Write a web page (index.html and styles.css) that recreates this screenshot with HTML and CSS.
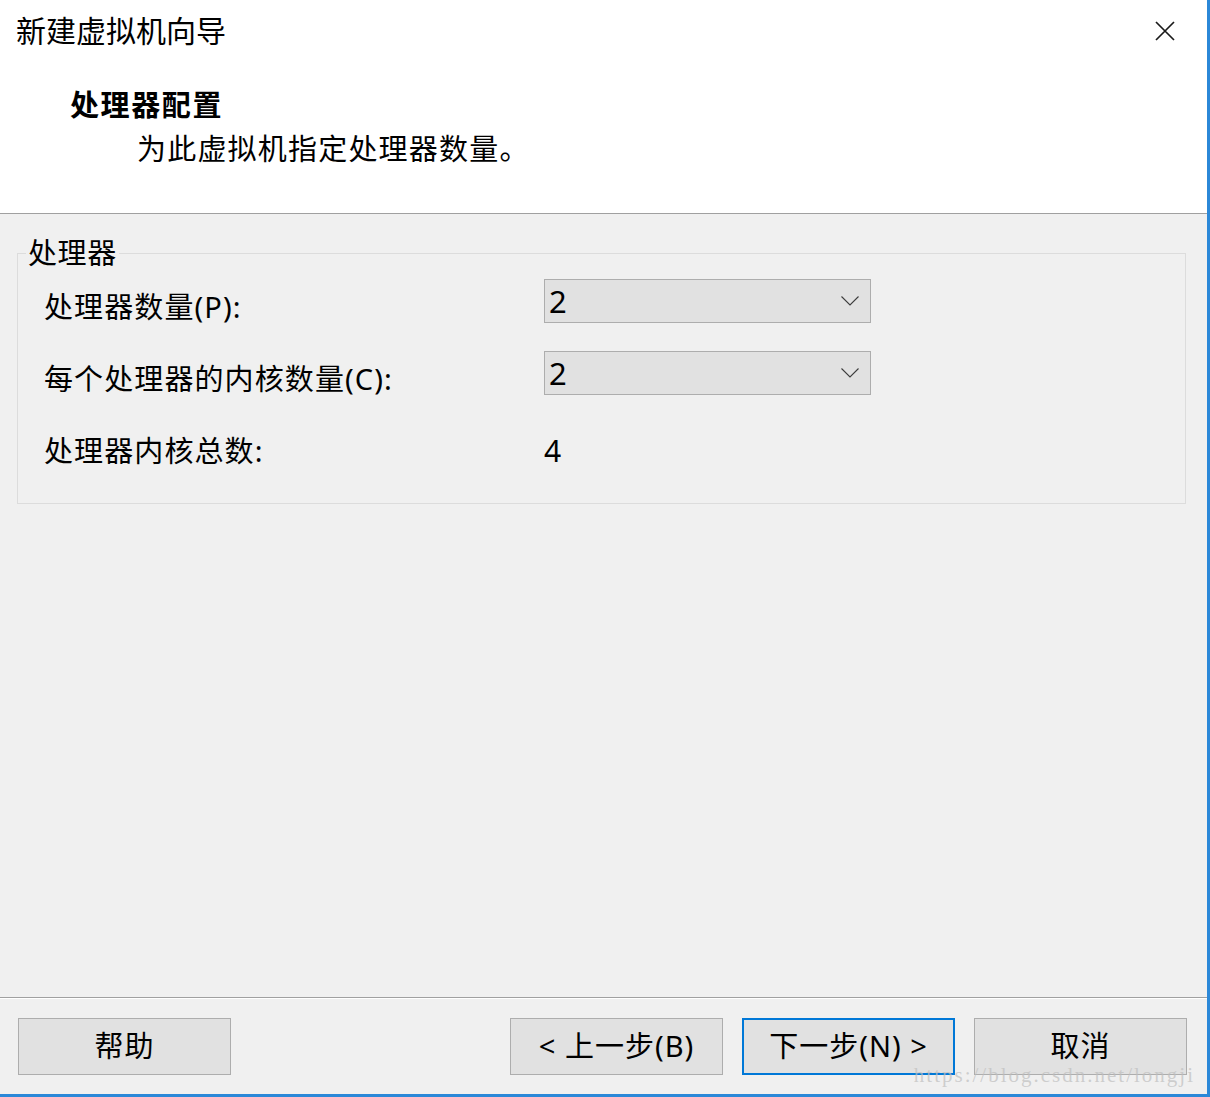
FILE: index.html
```html
<!DOCTYPE html>
<html lang="zh-CN">
<head>
    <meta charset="UTF-8" />
    <title>新建虚拟机向导</title>
    <link rel="stylesheet" href="styles.css">
</head>
<body>
    <div class="janela">
        <header class="topo">
            <div class="barra-titulo">
                <h1>新建虚拟机向导</h1>
                <button class="fechar" title="关闭">
                    <svg width="22" height="22" viewBox="0 0 22 22">
                        <path d="M2 2 L20 20 M20 2 L2 20" stroke="#1a1a1a" stroke-width="1.7" fill="none" />
                    </svg>
                </button>
            </div>
            <h2>处理器配置</h2>
            <p class="subtitulo">为此虚拟机指定处理器数量。</p>
        </header>

        <main class="conteudo">
            <fieldset class="grupo">
                <legend>处理器</legend>
                <div class="linha">
                    <span class="rotulo">处理器数量(P):</span>
                    <div class="combo">
                        <span>2</span>
                        <svg width="18" height="10" viewBox="0 0 18 10">
                            <path d="M0.5 0.5 L9 9 L17.5 0.5" stroke="#3c3c3c" stroke-width="1.1" fill="none" />
                        </svg>
                    </div>
                </div>
                <div class="linha">
                    <span class="rotulo">每个处理器的内核数量(C):</span>
                    <div class="combo">
                        <span>2</span>
                        <svg width="18" height="10" viewBox="0 0 18 10">
                            <path d="M0.5 0.5 L9 9 L17.5 0.5" stroke="#3c3c3c" stroke-width="1.1" fill="none" />
                        </svg>
                    </div>
                </div>
                <div class="linha">
                    <span class="rotulo">处理器内核总数:</span>
                    <span class="rotulo valor">4</span>
                </div>
            </fieldset>
        </main>

        <footer class="rodape">
            <button class="botao">帮助</button>
            <div class="acoes">
                <button class="botao">&lt; 上一步(B)</button>
                <button class="botao padrao">下一步(N) &gt;</button>
                <button class="botao">取消</button>
            </div>
            <span class="marca">https://blog.csdn.net/longji</span>
        </footer>
    </div>
</body>
</html>
```

FILE: styles.css
```css
body {
    margin: 0;
    background-color: #f0f0f0;
    font-family: "Noto Sans", "Noto Sans CJK SC", sans-serif;
    color: #000;
}
.janela {
    width: 1207px;
    height: 1094px;
    border-right: 3px solid #2b88d8;
    border-bottom: 3px solid #2b88d8;
    display: flex;
    flex-direction: column;
    background-color: #f0f0f0;
}
.topo {
    height: 213px;
    background-color: #fff;
    border-bottom: 1px solid #a0a0a0;
    box-sizing: content-box;
}
.barra-titulo {
    display: flex;
    justify-content: space-between;
    align-items: center;
    padding: 11px 31px 0 16px;
    height: 40px;
}
.barra-titulo h1 {
    margin: 0;
    font-size: 30px;
    font-weight: normal;
    line-height: 40px;
}
.fechar {
    border: none;
    background: none;
    padding: 0;
    width: 22px;
    height: 22px;
}
.topo h2 {
    margin: 34px 0 0 70px;
    font-size: 29px;
    font-weight: bold;
    line-height: 40px;
    letter-spacing: 1.6px;
}
.subtitulo {
    margin: 4px 0 0 137px;
    font-size: 29px;
    line-height: 40px;
    letter-spacing: 1.2px;
}
.conteudo {
    flex: 1;
    padding: 24px 0 0 17px;
}
.grupo {
    width: 1169px;
    margin: 0;
    padding: 11px 0 36px 8px;
    border: 1px solid #dcdcdc;
    box-sizing: border-box;
}
.grupo legend {
    padding: 0 2px;
    font-size: 29px;
    line-height: 30px;
    letter-spacing: 0.6px;
}
.linha {
    display: flex;
    align-items: flex-start;
    height: 44px;
    padding-left: 18px;
    margin-bottom: 28px;
}
.linha:last-child {
    margin-bottom: 0;
}
.rotulo {
    width: 500px;
    font-size: 29px;
    line-height: 44px;
    margin-top: 6px;
    letter-spacing: 1.1px;
}
.valor {
    width: auto;
    font-size: 30px;
}
.combo {
    width: 327px;
    height: 44px;
    box-sizing: border-box;
    border: 1px solid #adadad;
    background-color: #e1e1e1;
    display: flex;
    align-items: center;
    justify-content: space-between;
    padding: 0 11px 0 4px;
    font-size: 31px;
}
.rodape {
    position: relative;
    height: 97px;
    box-sizing: border-box;
    border-top: 1px solid #a0a0a0;
    box-shadow: inset 0 1px 0 #fff;
    display: flex;
    justify-content: space-between;
    align-items: flex-start;
    padding: 20px 20px 0 18px;
}
.acoes {
    display: flex;
    gap: 19px;
}
.botao {
    width: 213px;
    height: 57px;
    border: 1px solid #adadad;
    background-color: #e1e1e1;
    font-family: "Noto Sans", "Noto Sans CJK SC", sans-serif;
    font-size: 29px;
    line-height: 1;
    letter-spacing: 1px;
    color: #000;
    padding: 0 0 3px 0;
}
.botao.padrao {
    border: 2px solid #0078d7;
}
.marca {
    position: absolute;
    right: 12px;
    bottom: 6px;
    font-family: "Liberation Serif", serif;
    font-size: 21px;
    color: rgba(190, 190, 190, 0.7);
    letter-spacing: 2px;
}
```
